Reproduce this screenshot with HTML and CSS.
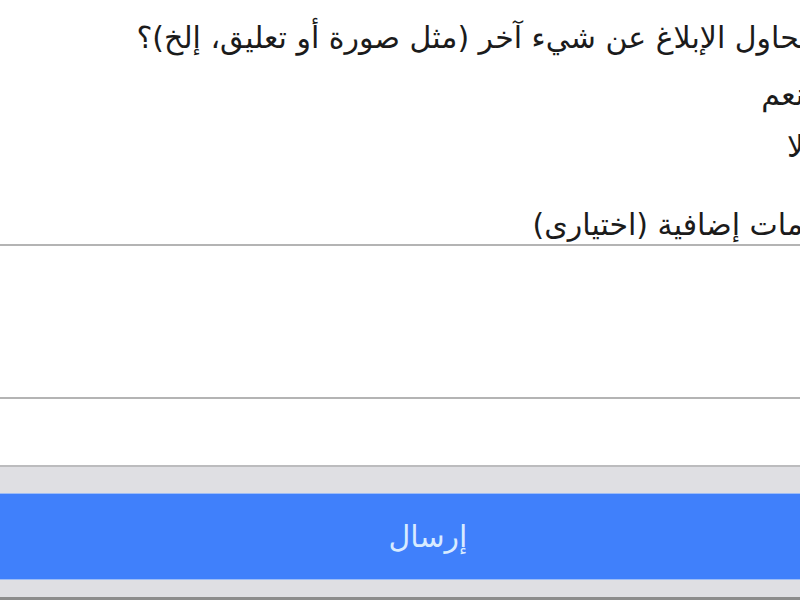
FILE: index.html
```html
<!DOCTYPE html>
<html lang="ar" dir="rtl">

<head>
  <meta charset="UTF-8">
  <meta name="viewport" content="width=device-width, initial-scale=1.0">
  <title>إبلاغ</title>
  <link rel="stylesheet" href="styles.css">
</head>

<body>
  <div class="page">
    <form class="report-form">
      <p class="question">هل تحاول الإبلاغ عن شيء آخر (مثل صورة أو تعليق، إلخ)؟</p>

      <div class="options">
        <label class="option"><input type="radio" name="other">نعم</label>
        <label class="option"><input type="radio" name="other">لا</label>
      </div>

      <p class="field-label">معلومات إضافية (اختيارى)</p>
      <textarea class="details"></textarea>
      <div class="spacer"></div>

      <div class="toolbar">
        <button type="button" class="send-button">إرسال</button>
      </div>
    </form>
  </div>
</body>

</html>
```

FILE: styles.css
```css
html, body {
  margin: 0;
  height: 600px;
  overflow: hidden;
  background: #ffffff;
}

body {
  font-family: "DejaVu Sans", sans-serif;
  color: #1b1b1b;
}

/* the form is wider than the screen, its right edge is cut off */
.page {
  margin-right: -56px;
}

.report-form {
  display: flex;
  flex-direction: column;
}

.question {
  font-size: 30px;
  line-height: 44px;
  margin: 16px 0 0 0;
  white-space: nowrap;
}

.options {
  display: flex;
  flex-direction: column;
  margin-top: 9px;
}

.option {
  display: flex;
  align-items: center;
  font-size: 30px;
  line-height: 52px;
}

.option input {
  margin: 0 0 0 30px;
  width: 22px;
  height: 22px;
}

.field-label {
  font-size: 30px;
  line-height: 38px;
  margin: 33px -3px 0 0;
  white-space: nowrap;
}

.details {
  display: block;
  height: 151px;
  margin: 0;
  padding: 0;
  border: none;
  border-top: 2px solid #b4b4b4;
  border-bottom: 2px solid #b4b4b4;
  resize: none;
  background: #ffffff;
}

.spacer {
  height: 66px;
  border-bottom: 2px solid #bcbcbe;
}

.toolbar {
  background-color: #dfdfe3;
  padding: 26px 0 17px 0;
  border-bottom: 3px solid #8c8c8c;
}

.send-button {
  display: block;
  width: 100%;
  height: 87px;
  background-color: #4080fb;
  color: #d8ebff;
  border: none;
  border-top: 1px solid #9dbcf6;
  border-bottom: 1px solid #9dbcf6;
  font-family: "DejaVu Sans", sans-serif;
  font-size: 30px;
  cursor: pointer;
}
```
